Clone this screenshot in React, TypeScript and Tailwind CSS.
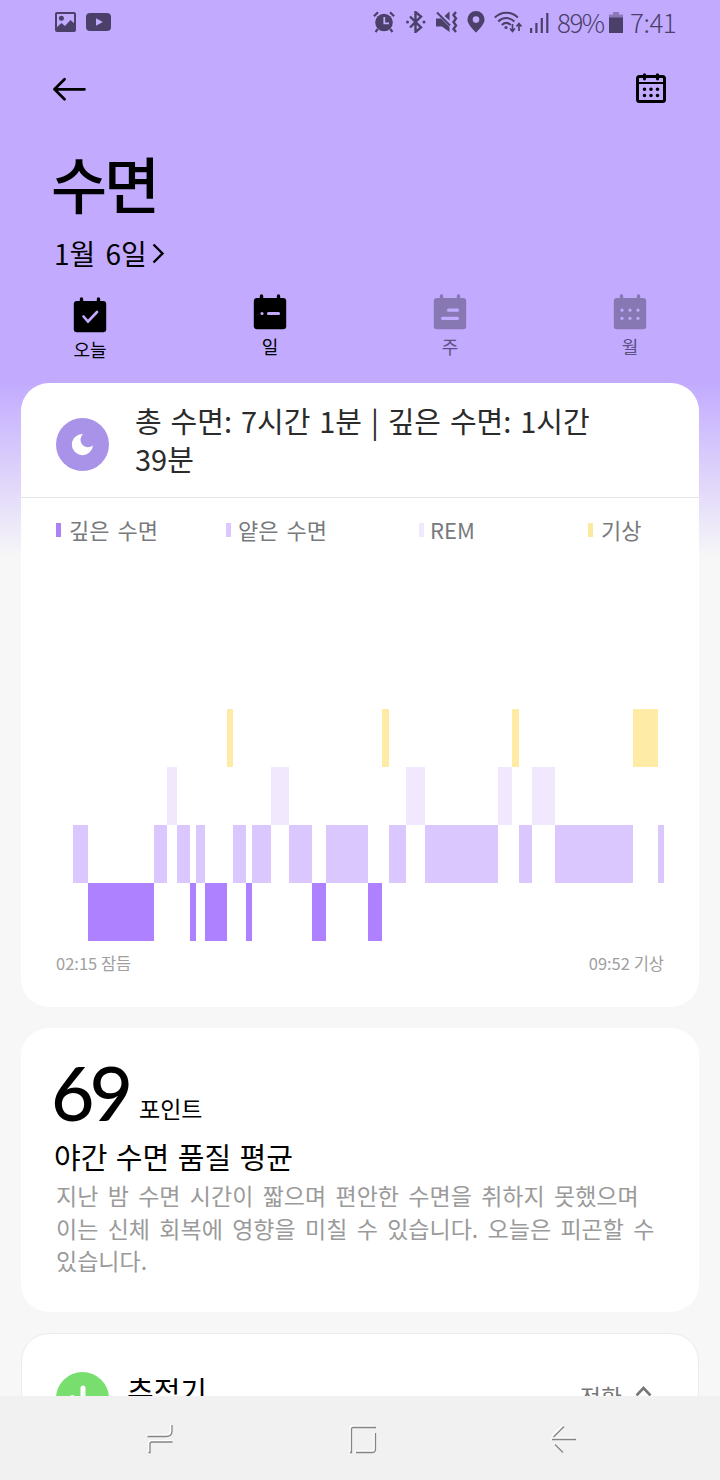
import React from 'react';

type Stage = 'awake' | 'rem' | 'light' | 'deep';

const STAGES: Record<Stage, { row: number; color: string }> = {
  awake: { row: 0, color: '#feeca6' },
  rem: { row: 1, color: '#f1e8fd' },
  light: { row: 2, color: '#d9c7fd' },
  deep: { row: 3, color: '#ad81ff' },
};

// [stage, width] in order, 02:15 -> 09:52
const SEGMENTS: [Stage, number][] = [
  ['light', 15], ['deep', 66], ['light', 13], ['rem', 10], ['light', 13], ['deep', 6],
  ['light', 9], ['deep', 22], ['awake', 6], ['light', 13], ['deep', 6], ['light', 19],
  ['rem', 18], ['light', 23], ['deep', 14], ['light', 42], ['deep', 14], ['awake', 7],
  ['light', 17], ['rem', 19], ['light', 73], ['rem', 14], ['awake', 7], ['light', 13],
  ['rem', 23], ['light', 78], ['awake', 25], ['light', 6],
];

const ROW_HEIGHT = 58;

const SleepChart = () => {
  let x = 17;
  return (
    <svg width="608" height="232" viewBox="0 0 608 232" shapeRendering="crispEdges">
      {SEGMENTS.map(([stage, width], i) => {
        const left = x;
        x += width;
        return (
          <rect
            key={i}
            x={left}
            y={STAGES[stage].row * ROW_HEIGHT}
            width={width}
            height={ROW_HEIGHT}
            fill={STAGES[stage].color}
          />
        );
      })}
    </svg>
  );
};

const StatusBar = () => (
  <div className="flex h-11 items-center pl-[55px] pr-[43px] text-[#4b4069]">
    <svg width="21" height="20" viewBox="0 0 21 20" fill="none">
      <rect x="1" y="1" width="19" height="18" rx="1" stroke="currentColor" strokeWidth="2" />
      <circle cx="6.4" cy="6.3" r="2.5" fill="currentColor" />
      <path d="M1 16l5.5-5 3.5 3 5.5-6L20 12v7H1z" fill="currentColor" />
    </svg>
    <svg className="ml-[10px]" width="25" height="18" viewBox="0 0 25 18">
      <rect width="25" height="18" rx="4" fill="currentColor" />
      <path d="M10 5.2v7.6l6.8-3.8z" fill="#c2abff" />
    </svg>

    <div className="ml-auto flex items-center">
      {/* alarm */}
      <svg width="22" height="22" viewBox="0 0 22 22" fill="none" stroke="currentColor">
        <circle cx="11" cy="11.5" r="8.8" fill="currentColor" stroke="none" />
        <path d="M.9 5.2L5 1.2M21.1 5.2L17 1.2M4.8 18L2.5 21M17.2 18l2.3 3" strokeWidth="2.2" />
        <path d="M11.3 6v6.3h4.7" stroke="#c2abff" strokeWidth="1.8" />
      </svg>
      {/* bluetooth */}
      <svg className="ml-[11px]" width="20" height="22" viewBox="0 0 20 22" fill="none">
        <path d="M4 5.5l11 11L9.500 21V1L15 5.5l-11 11" stroke="currentColor" strokeWidth="2.4" />
        <circle cx="1.5" cy="11" r="1.5" fill="currentColor" />
        <circle cx="18" cy="11" r="1.5" fill="currentColor" />
      </svg>
      {/* muted, vibrating */}
      <svg className="ml-[10px]" width="22" height="22" viewBox="0 0 22 22" fill="none" stroke="currentColor">
        <path d="M0 7.5h5l3 3 5.500 5.500v5L6 15.500H0zM8.500 5l5-4.500v9z" fill="currentColor" stroke="none" />
        <path d="M1 1.500l13 13" strokeWidth="2" />
        <path d="M20 1l-2.500 3 2.500 3.500-2.500 3.500 2.500 3.500-2.500 3.500 2.500 3" strokeWidth="2.400" />
      </svg>
      {/* location */}
      <svg className="ml-[9px]" width="18" height="22" viewBox="0 0 18 22">
        <path d="M9 0a8.600 8.600 0 0 0-8.600 8.500C.4 14 9 21.500 9 21.500S17.600 14 17.600 8.500A8.600 8.600 0 0 0 9 0zm0 5.300a3.300 3.300 0 1 1 0 6.600 3.300 3.300 0 0 1 0-6.600z" fill="currentColor" fillRule="evenodd" />
      </svg>
      {/* wifi with traffic arrows */}
      <svg className="ml-[9px]" width="29" height="22" viewBox="0 0 29 22" fill="none" stroke="currentColor">
        <path d="M.8 6.500c6.500-6.500 16.500-6.500 23 0" strokeWidth="2" />
        <path d="M4.200 10.500c4.700-4.600 11.500-4.600 16.200 0" strokeWidth="2" />
        <path d="M7.800 14c2.800-2.600 6.200-2.600 9 0" strokeWidth="2" />
        <circle cx="12" cy="16.500" r="1.600" fill="currentColor" stroke="none" />
        <path d="M18.500 13v7M16 17.500l2.500 3 2.500-3M25 20v-7M22.500 15.500l2.500-3 2.500 3" strokeWidth="1.700" />
      </svg>
      {/* signal */}
      <svg className="ml-[7px]" width="19" height="21" viewBox="0 0 19 21" fill="currentColor">
        <path d="M0 16h2.200v5H0zM5.300 11h2.200v10H5.300zM10.700 6h2.200v15h-2.200zM16.200 1h2.200v20h-2.200z" />
      </svg>
      <span className="ml-[8px] w-[52px] whitespace-nowrap text-[26px] font-light leading-[26px] tracking-[-1.5px]">89%</span>
      <svg width="14" height="21" viewBox="0 0 14 21">
        <path d="M4 0h6v2.500h4V7H0V2.500h4z" fill="#8a78b8" />
        <path d="M0 5.500h14V21H0z" fill="currentColor" />
      </svg>
      <span className="ml-[7px] w-[47px] whitespace-nowrap text-[26px] font-light leading-[26px] tracking-[-0.5px]">7:41</span>
    </div>
  </div>
);

const TabIcon = ({ children }: { children: React.ReactNode }) => (
  <svg width="34" height="36" viewBox="0 0 34 36" fill="none">
    <path d="M8.500 2v6M25.500 2v6" stroke="currentColor" strokeWidth="3.400" strokeLinecap="round" />
    <rect x=".8" y="4" width="32.400" height="31.200" rx="3" fill="currentColor" />
    <g stroke="#c2abff" strokeWidth="3.200" strokeLinecap="round">{children}</g>
  </svg>
);

const Tabs = () => (
  <div className="mt-[25px] grid grid-cols-4 text-[18px] leading-6">
    <div className="flex flex-col items-center gap-[4px] pt-[3px] text-black">
      <TabIcon>
        <path d="M10.500 19.500l4.500 5 9-9.500" strokeWidth="2.600" />
      </TabIcon>
      오늘
    </div>
    <div className="flex flex-col items-center gap-[4px] text-black">
      <TabIcon>
        <path d="M9 19.500h.01M15.500 19.500h10" />
      </TabIcon>
      일
    </div>
    <div className="flex flex-col items-center gap-[4px] text-[#8778b3]">
      <TabIcon>
        <path d="M15.500 16.200h9M9.500 24.300h15" />
      </TabIcon>
      <span className="text-[#5d5085]">주</span>
    </div>
    <div className="flex flex-col items-center gap-[4px] text-[#8778b3]">
      <TabIcon>
        <path d="M9 16.200h.01M17 16.200h.01M25 16.200h.01M9 24.300h.01M17 24.300h.01M25 24.300h.01" />
      </TabIcon>
      <span className="text-[#5d5085]">월</span>
    </div>
  </div>
);

const Header = () => (
  <header>
    <div className="flex h-[90px] items-center justify-between pl-[52px] pr-[54px]">
      <svg width="35" height="24" viewBox="0 0 35 24" fill="none" stroke="#000" strokeWidth="2.700" strokeLinecap="round" strokeLinejoin="round">
        <path d="M32.500 12.300H2.500M12.500 2.300L2.500 12.300l10 10" />
      </svg>
      <svg className="mb-[2px]" width="30" height="30" viewBox="0 0 30 30" fill="none" stroke="#000" strokeLinecap="round">
        <rect x="1.500" y="3.500" width="27" height="25" rx="2" strokeWidth="3" />
        <path d="M2 10h26" strokeWidth="2.200" />
        <path d="M8.500 1.800v4M21.500 1.800v4" strokeWidth="3.200" />
        <path d="M8.500 16.300h.01M15 16.300h.01M21.500 16.300h.01M8.500 22.500h.01M15 22.500h.01M21.500 22.500h.01" strokeWidth="3.600" />
      </svg>
    </div>
    <h1 className="mt-[17px] pl-[51px] text-[61px] font-medium leading-[64px] tracking-[-3px]">수면</h1>
    <div className="mt-[22px] flex items-center pl-[54px]">
      <span className="w-[91px] whitespace-nowrap text-[28px] leading-8 [word-spacing:4px]">1월 6일</span>
      <svg className="ml-[7px]" width="13" height="21" viewBox="0 0 13 21" fill="none" stroke="#000" strokeWidth="2.400">
        <path d="M1.500 1.500l9 9-9 9" />
      </svg>
    </div>
    <Tabs />
  </header>
);

const SleepCard = () => (
  <section className="mx-[21px] h-[624px] rounded-[28px] bg-white">
    <div className="flex h-[115px] border-b border-[#e6e6e6] pl-[35px]">
      <svg className="mt-[35px] shrink-0" width="53" height="53" viewBox="0 0 53 53">
        <circle cx="26.500" cy="26.500" r="26.500" fill="#a893e8" />
        <path d="M27 16a10.600 10.600 0 1 0 10 11.300 6.800 6.800 0 0 1-10-11.300z" fill="#fff" />
      </svg>
      <p className="ml-[26px] mt-[18px] whitespace-nowrap text-[29px] leading-[38px] text-[#2b2b2b] [word-spacing:2.4px]">
        총 수면: 7시간 1분 | 깊은 수면: 1시간
        <br />
        39분
      </p>
    </div>

    <div className="flex h-[63px] items-center pl-[35px] text-[22px] leading-8 text-[#777a7d] [word-spacing:3px]">
      <div className="flex w-[170px] items-center gap-[8px]">
        <i className="h-[14px] w-[5px] bg-[#ad81f5]" />
        <span className="-mt-px">깊은 수면</span>
      </div>
      <div className="flex w-[193px] items-center gap-[7px]">
        <i className="h-[14px] w-[5px] bg-[#d9c7fd]" />
        <span className="-mt-px">얕은 수면</span>
      </div>
      <div className="flex w-[169px] items-center gap-[6px]">
        <i className="h-[14px] w-[5px] bg-[#f1e8fd]" />
        <span className="-mt-px">REM</span>
      </div>
      <div className="flex items-center gap-[8px]">
        <i className="h-[14px] w-[5px] bg-[#fbe99d]" />
        <span className="-mt-px">기상</span>
      </div>
    </div>

    <div className="px-[35px] pt-[148px]">
      <SleepChart />
      <div className="mt-[10px] flex justify-between text-[16.5px] leading-6 text-[#a0a0a0]">
        <span>02:15 잠듬</span>
        <span>09:52 기상</span>
      </div>
    </div>
  </section>
);

const ScoreCard = () => (
  <section className="mx-[21px] mt-[21px] h-[284px] rounded-[28px] bg-white pl-[30px] pt-[28px]">
    <div className="flex h-[76px] items-start">
      <span className="font-['Lato'] text-[75px] font-medium leading-[72px] tracking-[-5px]">69</span>
      <span className="ml-[11px] mt-[36px] text-[23px] leading-8">포인트</span>
    </div>
    <h2 className="mt-[4px] pl-[3px] text-[29px] leading-10 [word-spacing:2px]">야간 수면 품질 평균</h2>
    <p className="pl-[5px] pt-[3px] text-[23px] leading-[32.5px] text-[#9a9a9a] [word-spacing:4.2px]">
      지난 밤 수면 시간이 짧으며 편안한 수면을 취하지 못했으며
      <br />
      이는 신체 회복에 영향을 미칠 수 있습니다. 오늘은 피곤할 수
      <br />
      있습니다.
    </p>
  </section>
);

const TrackerCard = () => (
  <section className="mx-[21px] mt-[21px] h-[120px] rounded-[28px] border border-[#ebebeb] bg-white pl-[34px] pr-[46px] pt-[37px]">
    <div className="flex">
      <svg width="53" height="54" viewBox="0 0 53 54">
        <circle cx="26.500" cy="27.500" r="26.500" fill="#78df6f" />
        <path d="M27 17v20M16.500 26.500v8" stroke="#fff" strokeWidth="5" strokeLinecap="round" />
      </svg>
      <span className="ml-[18px] -mt-px text-[29px] leading-10">추적기</span>
      <span className="ml-auto mt-[9px] text-[23px] leading-8 text-[#777]">전환</span>
      <svg className="ml-[13px] mt-[15px]" width="17" height="11" viewBox="0 0 17 11" fill="none" stroke="#777" strokeWidth="2.600">
        <path d="M1.500 9.500l7-7.500 7 7.500" />
      </svg>
    </div>
  </section>
);

const NavBar = () => (
  <nav className="flex h-[84px] shrink-0 items-center overflow-hidden bg-[#f1f1f1] pl-[145px] pt-[3px]">
    {[
      'M2.500 12.500H21Q27 12.500 27 7V1M27.500 18H7Q5 18 5 20v8.500H3.500',
      'M3 28.500h1.500V5Q4.500 3.500 6 3.500H29M9 28.500H25Q28.500 28.500 28.500 25V9',
      'M3 15.500H27M4.500 13L15 2.500M6 20.500l8 8',
    ].map((d, i) => (
      <svg key={i} className="mr-[171px] shrink-0" width="31" height="31" viewBox="0 0 31 31" fill="none">
        <path d={d} transform="translate(-1.200 -1.200)" stroke="#fff" strokeWidth="1.500" />
        <path d={d} stroke="#858585" strokeWidth="1.300" />
      </svg>
    ))}
  </nav>
);

export default function App() {
  return (
    <div className="flex h-[1480px] w-[720px] flex-col overflow-hidden bg-[#f7f7f7] font-['Noto_Sans_CJK_KR',sans-serif] text-black">
      <div className="min-h-0 flex-1 overflow-hidden bg-[linear-gradient(to_bottom,#c2abff_0,#c2abff_383px,#f7f7f7_558px)]">
        <div className="flex h-[383px] flex-col">
          <StatusBar />
          <Header />
        </div>
        <SleepCard />
        <ScoreCard />
        <TrackerCard />
      </div>
      <NavBar />
    </div>
  );
}
